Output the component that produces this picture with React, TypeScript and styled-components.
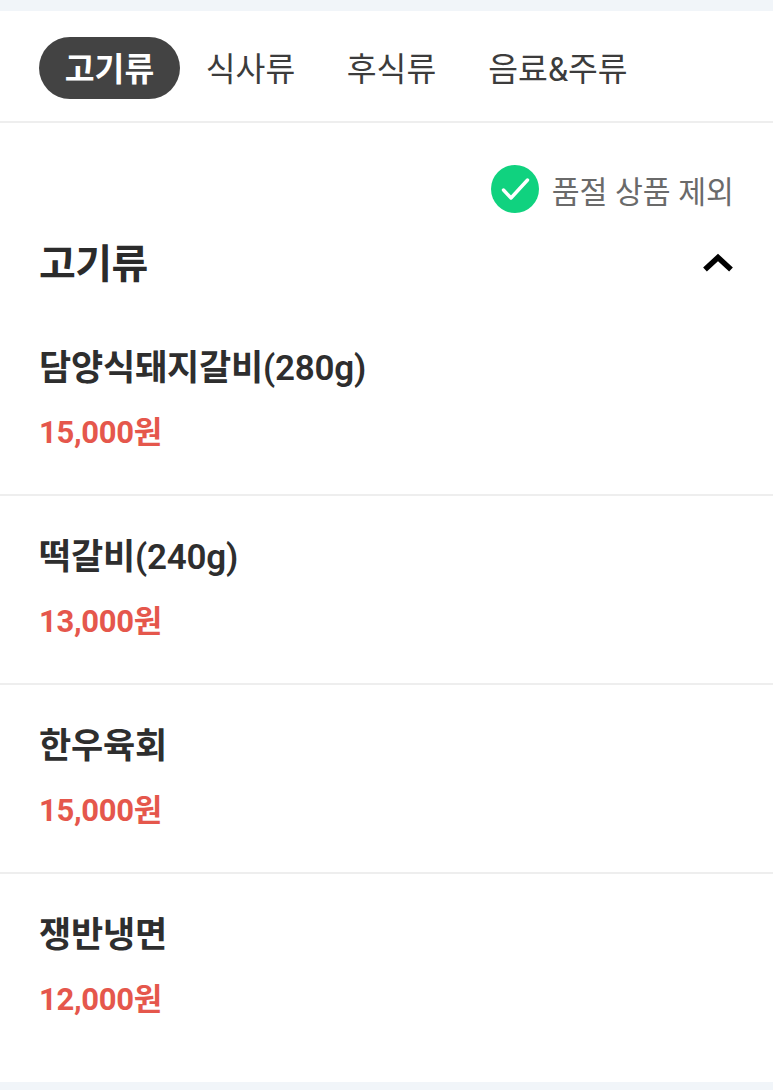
import React from 'react';
import styled, { createGlobalStyle } from 'styled-components';

const Global = createGlobalStyle`
  html, body { margin: 0; padding: 0; background: #fff; }
  body { font-family: Roboto, "Noto Sans CJK KR", sans-serif; }
`;
const Page = styled.div`
  width: 773px; height: 1090px; background: #f1f5f9; padding: 11px 0 8px; box-sizing: border-box; overflow: hidden;
`;
const Sheet = styled.div`background: #fff; height: 100%;`;
const Tabs = styled.nav`
  height: 112px; box-sizing: border-box; border-bottom: 2px solid #eeeeee; padding: 26px 0 0 39px; display: flex; align-items: flex-start;
`;
const Tab = styled.div<{ $active?: boolean; $w: number }>`
  width: ${p => p.$w}px; height: 62px; box-sizing: border-box; padding-bottom: 4px; border-radius: 31px; display: flex; align-items: center; justify-content: center; flex: none;
  font-size: 32.4px; font-weight: ${p => (p.$active ? 700 : 400)};
  color: ${p => (p.$active ? '#fff' : '#3c3c3c')}; background: ${p => (p.$active ? '#434343' : 'transparent')};
`;
const Filter = styled.div`
  display: flex; justify-content: flex-end; align-items: center; gap: 13px; padding: 42px 39px 0 0; height: 48px; color: #6a6a6a; font-size: 30.3px;
`;
const FilterLabel = styled.span`padding-top: 1px;`;
const Section = styled.div`
  display: flex; justify-content: space-between; align-items: center; padding: 0 39px; height: 50px; margin-top: 23px;
  font-size: 40px; font-weight: 700; color: #2b2b2b; letter-spacing: -0.5px;
`;
const Chevron = styled.svg`margin-top: 2px;`;
const Item = styled.div<{ $last?: boolean }>`
  padding: 0 39px; height: 189px; box-sizing: border-box; border-bottom: ${p => (p.$last ? 'none' : '2px solid #eeeeee')};
  display: flex; flex-direction: column;
`;
const List = styled.div`margin-top: 21px;`;
const Name = styled.div`font-size: 35px; font-weight: 600; color: #2e2e2e; line-height: 46px; margin-top: 39px; letter-spacing: -0.2px;`;
const Price = styled.div`font-size: 31px; font-weight: 700; color: #e5574c; line-height: 40px; margin-top: 21px; letter-spacing: -0.3px;`;

const items = [
  ['담양식돼지갈비(280g)', '15,000원'],
  ['떡갈비(240g)', '13,000원'],
  ['한우육회', '15,000원'],
  ['쟁반냉면', '12,000원'],
];

export default function App() {
  return (
    <Page>
      <Global />
      <Sheet>
        <Tabs>
          <Tab $active $w={141}>고기류</Tab>
          <Tab $w={141}>식사류</Tab>
          <Tab $w={141}>후식류</Tab>
          <Tab $w={192}>음료&주류</Tab>
        </Tabs>
        <Filter>
          <svg width="48" height="48" viewBox="0 0 48 48"><circle cx="24" cy="24" r="24" fill="#10d27f" /><path d="M12.5 25l7.5 8 16.5-18" fill="none" stroke="#fff" strokeWidth="3.4" strokeLinecap="round" strokeLinejoin="round" /></svg>
          <FilterLabel>품절 상품 제외</FilterLabel>
        </Filter>
        <Section>
          고기류
          <Chevron width="32" height="20" viewBox="0 0 32 20"><path d="M3 17.5L16 5.5l13 12" fill="none" stroke="#000" strokeWidth="5.5" /></Chevron>
        </Section>
        <List>
          {items.map(([n, p], i) => (
            <Item key={n} $last={i === items.length - 1}>
              <Name>{n}</Name>
              <Price>{p}</Price>
            </Item>
          ))}
        </List>
      </Sheet>
    </Page>
  );
}
